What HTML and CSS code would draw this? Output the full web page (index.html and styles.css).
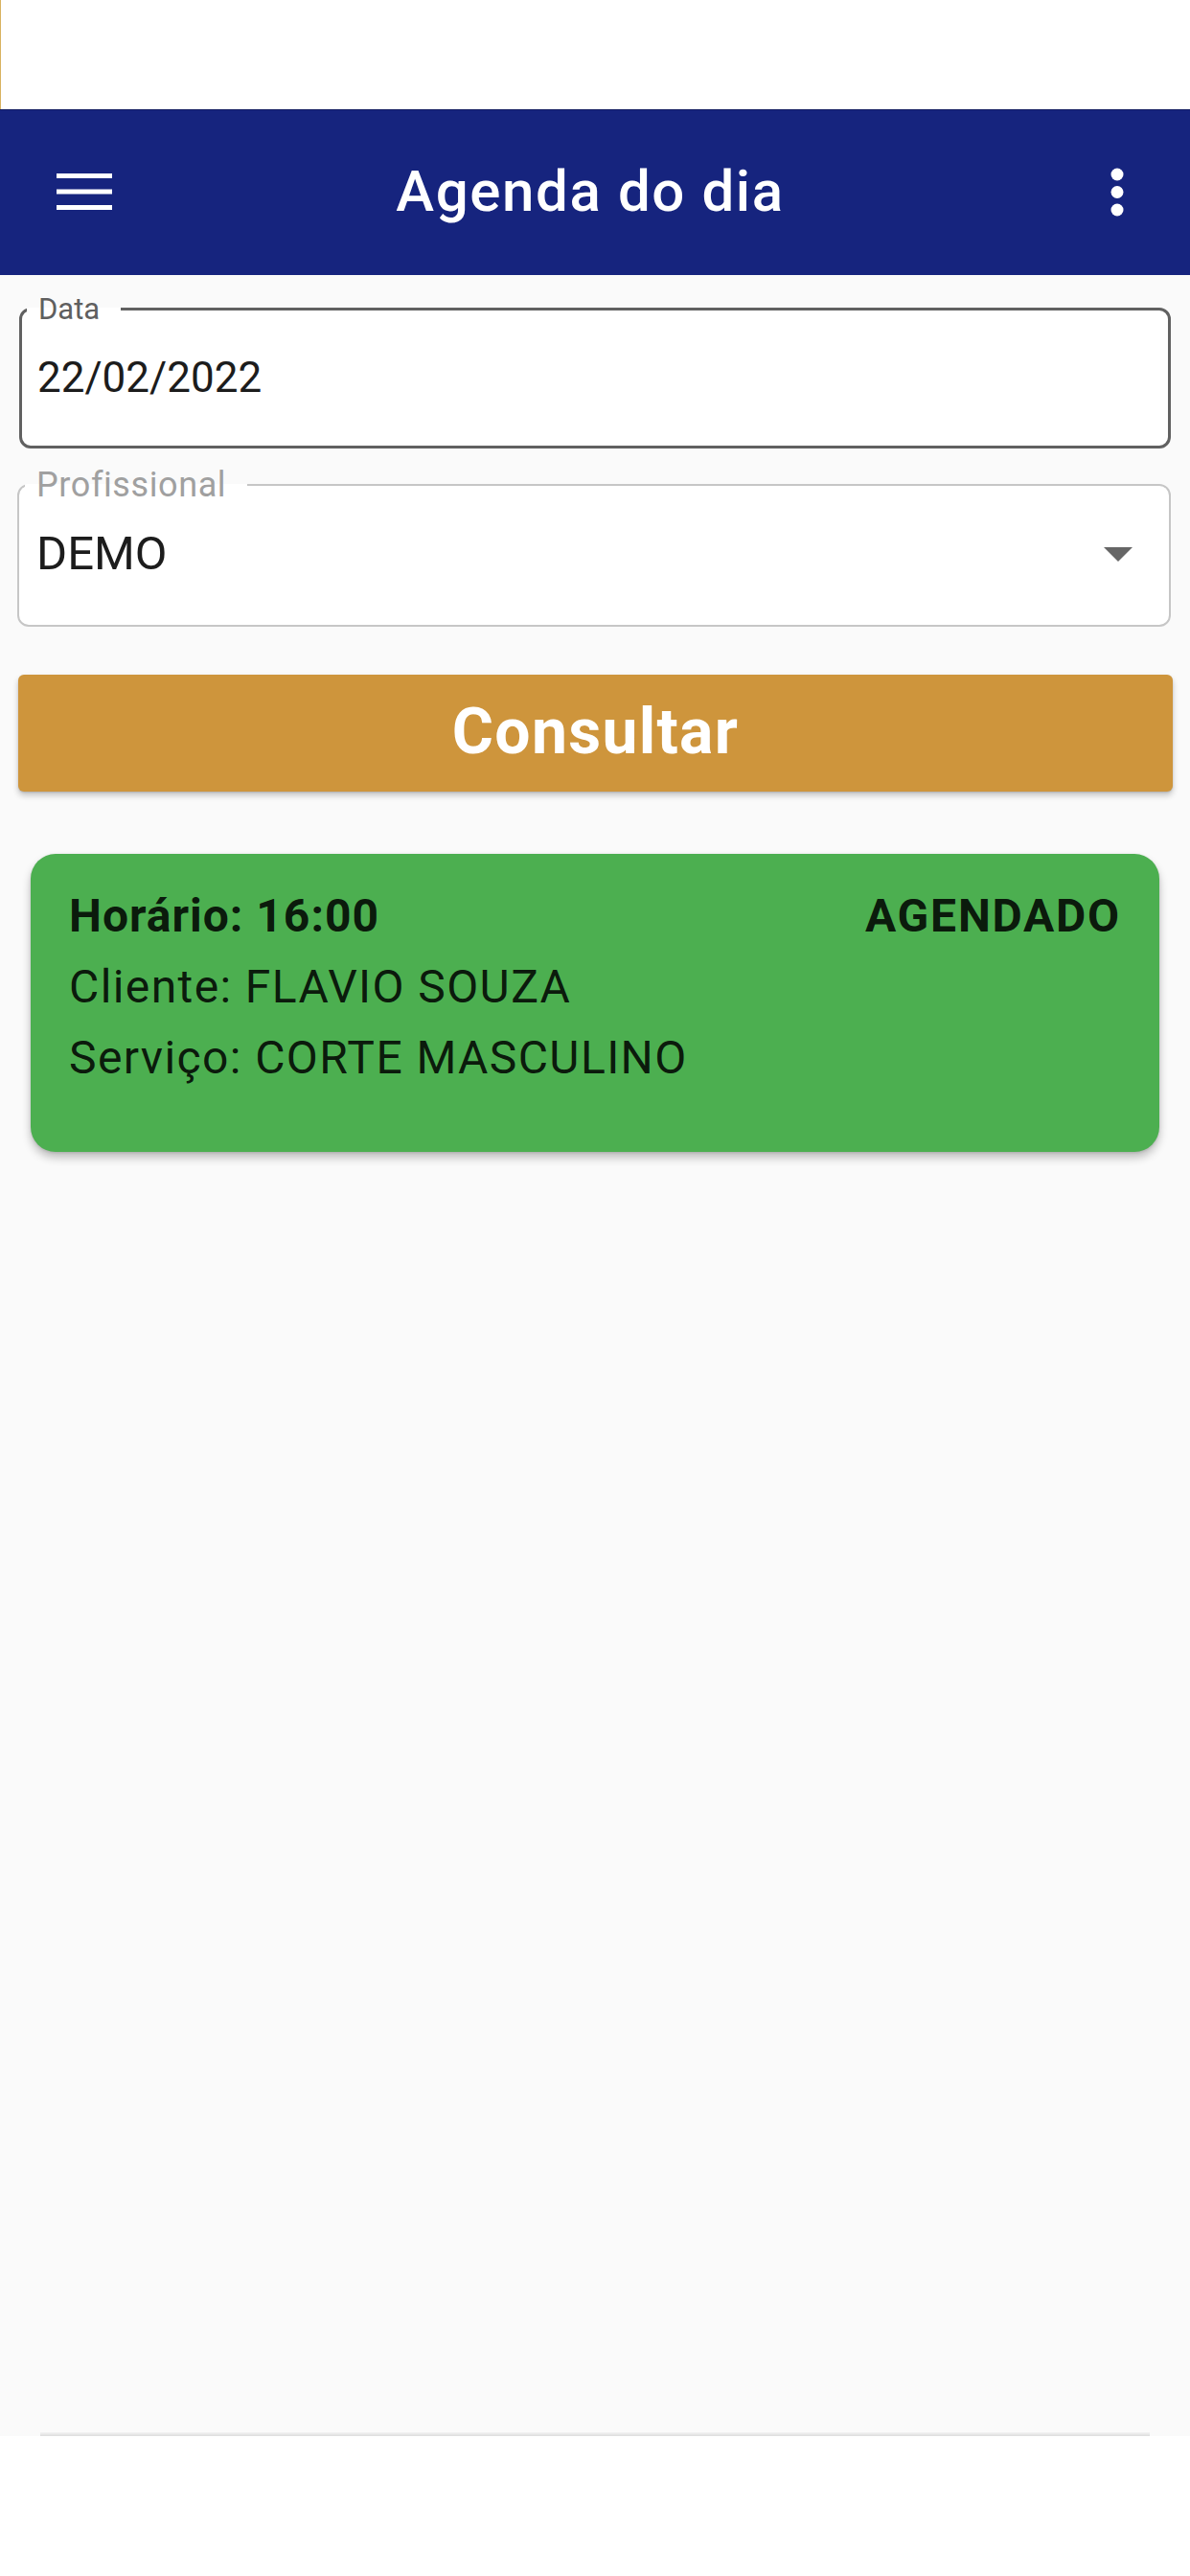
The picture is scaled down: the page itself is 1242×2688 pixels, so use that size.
FILE: index.html
```html
<!DOCTYPE html>
<html lang="pt-BR">
<head>
<meta charset="utf-8">
<title>Agenda do dia</title>
<link rel="stylesheet" href="styles.css">
</head>
<body>
<div class="status"></div>
<header class="appbar">
  <svg class="icon-menu" width="58" height="38" viewBox="0 0 58 38" aria-hidden="true">
    <rect x="0" y="0" width="58" height="5" fill="#fff"/>
    <rect x="0" y="16.5" width="58" height="5" fill="#fff"/>
    <rect x="0" y="33" width="58" height="5" fill="#fff"/>
  </svg>
  <h1 class="title">Agenda do dia</h1>
  <svg class="icon-more" width="14" height="52" viewBox="0 0 14 52" aria-hidden="true">
    <circle cx="7" cy="7" r="6.5" fill="#fff"/>
    <circle cx="7" cy="25.5" r="6.5" fill="#fff"/>
    <circle cx="7" cy="44" r="6.5" fill="#fff"/>
  </svg>
</header>
<main class="content">
  <fieldset class="field field-focused">
    <legend class="field-label">Data</legend>
    <div class="field-value">22/02/2022</div>
  </fieldset>
  <fieldset class="field field-select">
    <legend class="field-label">Profissional</legend>
    <div class="select-row">
      <div class="field-value">DEMO</div>
      <svg class="arrow" width="30" height="15" viewBox="0 0 30 15" aria-hidden="true">
        <path d="M0 0 L30 0 L15 15 Z" fill="#666"/>
      </svg>
    </div>
  </fieldset>
  <button class="btn">Consultar</button>
  <section class="card">
    <div class="card-row">
      <span class="strong">Horário: 16:00</span>
      <span class="strong status-tag">AGENDADO</span>
    </div>
    <div class="card-line">Cliente: FLAVIO SOUZA</div>
    <div class="card-line">Serviço: CORTE MASCULINO</div>
  </section>
</main>
<footer class="bottom">
  <div class="bottom-edge"></div>
</footer>
</body>
</html>
```

FILE: styles.css
```css
* { box-sizing: border-box; }

html, body {
  margin: 0;
  padding: 0;
}

body {
  width: 1242px;
  min-height: 2688px;
  display: flex;
  flex-direction: column;
  background: #ffffff;
  font-family: Roboto, "Noto Sans", "Liberation Sans", sans-serif;
  color: #1c1c1c;
}

.status {
  height: 114px;
  background: #ffffff;
  border-left: 1px solid #d9b260;
}

.appbar {
  height: 173px;
  background: #16247e;
  border-top: 1px solid #0f1a5e;
  display: grid;
  grid-template-columns: 1fr auto 1fr;
  align-items: center;
  padding: 0 69px 0 59px;
}

.icon-menu { justify-self: start; display: block; margin-top: -2px; }
.icon-more { justify-self: end; display: block; margin-top: -1px; }

.title {
  margin: 0;
  font-size: 60px;
  font-weight: 500;
  color: #ffffff;
  letter-spacing: 1.6px;
  line-height: 1;
  padding-bottom: 2px;
}

.content {
  flex: 1;
  background: #fafafa;
  padding-top: 17px;
  display: flex;
  flex-direction: column;
}

.field {
  margin: 0 20px;
  min-width: 0;
  background: #ffffff;
  border-radius: 12px;
}

.field-focused {
  border: 3px solid #616161;
  padding: 27px 16px 45px 16px;
}

.field-focused .field-label {
  font-size: 31px;
  color: #5f5f5f;
  margin-left: -11px;
  padding: 0 22px 0 12px;
}

.field-focused .field-value {
  font-size: 44px;
  line-height: 52px;
}

.field-select {
  margin-top: 17px;
  border: 2px solid #c6c6c6;
  padding: 22px 38px 45px 18px;
  margin-left: 18px;
}

.field-select .field-label {
  font-size: 36px;
  color: #a0a0a0;
  letter-spacing: 0.6px;
  margin-left: -12px;
  padding: 0 22px 0 12px;
}

.field-label {
  line-height: normal;
  font-weight: 400;
}

.select-row {
  display: flex;
  align-items: center;
  justify-content: space-between;
}

.field-select .field-value {
  font-size: 49px;
  line-height: 58px;
}

.arrow { display: block; }

.btn {
  margin: 50px 18px 0 19px;
  height: 122px;
  border: none;
  border-radius: 6px;
  background: #ce953c;
  color: #ffffff;
  font-family: Roboto, "Noto Sans", "Liberation Sans", sans-serif;
  font-size: 66px;
  font-weight: 700;
  letter-spacing: 1.3px;
  box-shadow: 0 4px 6px rgba(0, 0, 0, 0.22), 0 1px 2px rgba(0, 0, 0, 0.12);
  padding: 0 0 4px 0;
}

.card {
  margin: 65px 32px 0 32px;
  background: #4caf50;
  border-radius: 26px;
  padding: 37px 42px 70px 40px;
  box-shadow: 0 6px 10px rgba(0, 0, 0, 0.24), 0 1px 3px rgba(0, 0, 0, 0.12);
  color: rgba(0, 0, 0, 0.87);
  font-size: 48px;
  line-height: 56px;
  letter-spacing: 1.4px;
  display: flex;
  flex-direction: column;
  gap: 18px;
}

.card-row {
  display: flex;
  justify-content: space-between;
}

.strong { font-weight: 700; letter-spacing: 1px; }
.status-tag { letter-spacing: 1.8px; margin-right: -2px; }

.bottom {
  height: 146px;
  background: #ffffff;
  position: relative;
}

.bottom-edge {
  margin: -4px 42px 0 42px;
  height: 4px;
  background: linear-gradient(#f4f4f4, #dcdcdc);
}
```
